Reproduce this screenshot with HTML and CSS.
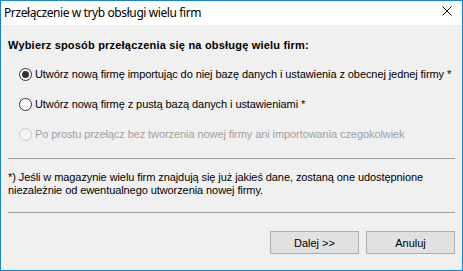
FILE: index.html
```html
<!DOCTYPE html>
<html lang="pl">
<head>
  <meta charset="UTF-8" />
  <title>Przełączenie w tryb obsługi wielu firm</title>
  <link rel="stylesheet" href="styles.css">
</head>
<body>
  <div class="window">
    <div class="titlebar">
      <span class="title">Przełączenie w tryb obsługi wielu firm</span>
      <svg class="close" width="10" height="10" viewBox="0 0 10 10">
        <path d="M0.5 0.5 L9.5 9.5 M9.5 0.5 L0.5 9.5" stroke="#000" stroke-width="1" fill="none" />
      </svg>
    </div>

    <div class="content">
      <h2>Wybierz sposób przełączenia się na obsługę wielu firm:</h2>

      <div class="options">
        <label class="option">
          <span class="radio checked"></span>
          Utwórz nową firmę importując do niej bazę danych i ustawienia z obecnej jednej firmy *
        </label>
        <label class="option">
          <span class="radio"></span>
          Utwórz nową firmę z pustą bazą danych i ustawieniami *
        </label>
        <label class="option disabled">
          <span class="radio"></span>
          Po prostu przełącz bez tworzenia nowej firmy ani importowania czegokolwiek
        </label>
      </div>

      <hr class="sep">

      <p class="note">*) Jeśli w magazynie wielu firm znajdują się już jakieś dane, zostaną one udostępnione<br>niezależnie od ewentualnego utworzenia nowej firmy.</p>

      <hr class="sep sep-bottom">

      <div class="buttons">
        <button>Dalej &gt;&gt;</button>
        <button>Anuluj</button>
      </div>
    </div>
  </div>
</body>
</html>
```

FILE: styles.css
```css
body {
  margin: 0;
  background-color: #f0f0f0;
  font-family: 'Liberation Sans', Arial, sans-serif;
  font-size: 11px;
  color: #000;
}
.window {
  box-sizing: border-box;
  width: 463px;
  height: 271px;
  border: 1px solid #1883d7;
  background-color: #f0f0f0;
  display: flex;
  flex-direction: column;
}
.titlebar {
  height: 24px;
  background-color: #fff;
  display: flex;
  align-items: center;
  justify-content: space-between;
  padding: 0 10px 0 3px;
}
.title {
  font-family: 'Noto Sans', 'Open Sans', sans-serif;
  font-size: 12px;
  letter-spacing: -0.4px;
  color: #000;
  margin-top: -2px;
}
.close {
  display: block;
  margin-top: -4px;
}
.content {
  padding: 14px 7px 0 7px;
  display: flex;
  flex-direction: column;
}
h2 {
  margin: 0;
  font-size: 11px;
  font-weight: bold;
  line-height: 13px;
  letter-spacing: 0.2px;
}
.options {
  display: flex;
  flex-direction: column;
  margin-top: 7px;
  padding-left: 11px;
}
.option {
  height: 30px;
  display: flex;
  align-items: center;
  gap: 3px;
  white-space: nowrap;
  letter-spacing: -0.08px;
}
.option.disabled {
  color: #a0a0a0;
}
.radio {
  box-sizing: border-box;
  width: 13px;
  height: 13px;
  border: 1px solid #333;
  border-radius: 50%;
  background-color: #fff;
  position: relative;
  flex: none;
}
.radio.checked::after {
  content: "";
  position: absolute;
  left: 2px;
  top: 2px;
  width: 7px;
  height: 7px;
  border-radius: 50%;
  background-color: #333;
}
.disabled .radio {
  border-color: #ccc;
  background-color: #f4f4f4;
}
.sep {
  margin: 9px 0 0 0;
  border: none;
  border-top: 1px solid #a0a0a0;
  height: 0;
}
.note {
  margin: 12px 0 0 0;
  line-height: 13px;
  letter-spacing: -0.08px;
}
.sep-bottom {
  margin-top: 15px;
}
.buttons {
  display: flex;
  justify-content: flex-end;
  gap: 7px;
  margin-top: 18px;
}
button {
  width: 89px;
  height: 23px;
  border: 1px solid #adadad;
  background-color: #e1e1e1;
  font-family: 'Liberation Sans', Arial, sans-serif;
  font-size: 11px;
  color: #000;
  padding: 0;
}
```
